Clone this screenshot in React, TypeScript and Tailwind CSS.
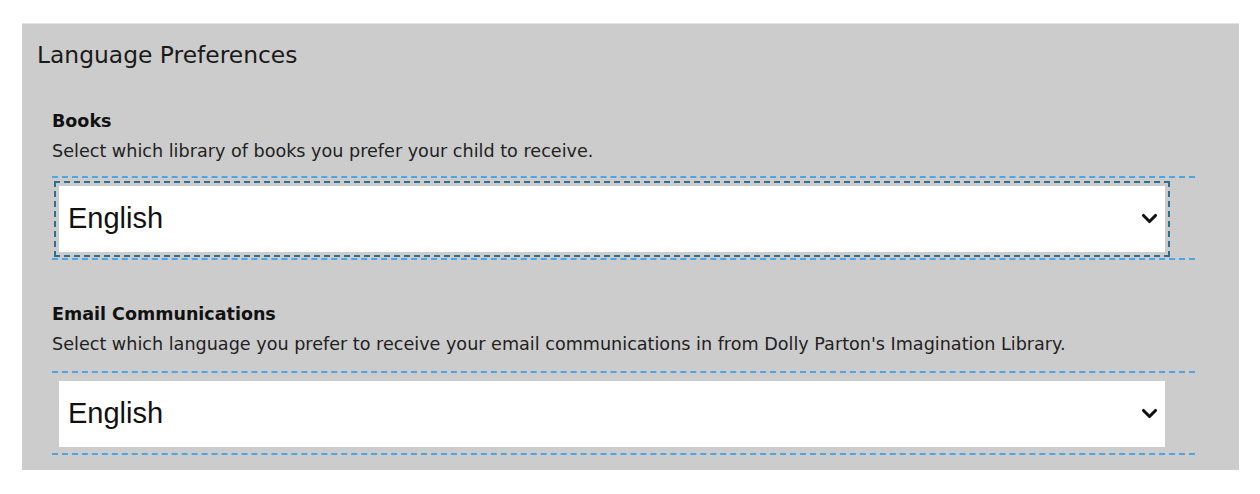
import { useState } from 'react';

type Pref = {
  id: string;
  label: string;
  help: string;
  value: string;
  focused?: boolean;
};

const prefs: Pref[] = [
  {
    id: 'books',
    label: 'Books',
    help: 'Select which library of books you prefer your child to receive.',
    value: 'English',
    focused: true,
  },
  {
    id: 'email',
    label: 'Email Communications',
    help: "Select which language you prefer to receive your email communications in from Dolly Parton's Imagination Library.",
    value: 'English',
  },
];

const languages = ['English', 'Español', 'Français'];

function Chevron() {
  return (
    <svg width="17" height="12" viewBox="0 0 17 12" className="pointer-events-none absolute right-[7px] top-1/2 -translate-y-1/2">
      <polyline points="2.5,2.5 8.5,8.5 14.5,2.5" fill="none" stroke="#111" strokeWidth="3.1" strokeLinecap="round" strokeLinejoin="round" />
    </svg>
  );
}

function PrefField({ p, first }: { p: Pref; first: boolean }) {
  const [val, setVal] = useState(p.value);
  return (
    <div className={first ? 'mt-[40px]' : 'mt-[43px]'}>
      <div className="text-[17.5px] leading-[22px] font-bold text-[#111]">{p.label}</div>
      <div className="mt-[4px] text-[17.6px] leading-[30px] text-[#222]">{p.help}</div>
      <div className={(first ? 'mt-[10px]' : 'mt-[12px]') + ' w-[1143px] border-y-2 border-dashed border-[#4ea5e3] pl-[7px] pt-[8px] pb-[6px]'}>
        <div className="relative w-[1106px]">
          <select
            value={val}
            onChange={e => setVal(e.target.value)}
            className={
              'block h-[66px] w-full appearance-none bg-white pl-[9px] text-[29px] text-[#111] ' +
              (p.focused ? 'outline-2 outline-dashed outline-offset-[3px] outline-[#2e6f93]' : 'outline-none')
            }
            style={{ fontFamily: '"Liberation Sans", Arial, sans-serif' }}
          >
            {languages.map(l => (
              <option key={l} value={l}>{l}</option>
            ))}
          </select>
          <Chevron />
        </div>
      </div>
    </div>
  );
}

export default function App() {
  return (
    <div className="min-h-[494px] bg-white pt-[23px]" style={{ fontFamily: '"DejaVu Sans", Verdana, sans-serif' }}>
      <div className="ml-[22px] w-[1217px] border-t border-[#e4e4e4] bg-[#cccccc] pl-[15px] pt-[16px] pb-[15px]">
        <h2 className="text-[23.4px] leading-[30px] font-normal text-[#1a1a1a]">Language Preferences</h2>
        <div className="pl-[15px]">
          {prefs.map((p, i) => (
            <PrefField key={p.id} p={p} first={i === 0} />
          ))}
        </div>
      </div>
    </div>
  );
}
